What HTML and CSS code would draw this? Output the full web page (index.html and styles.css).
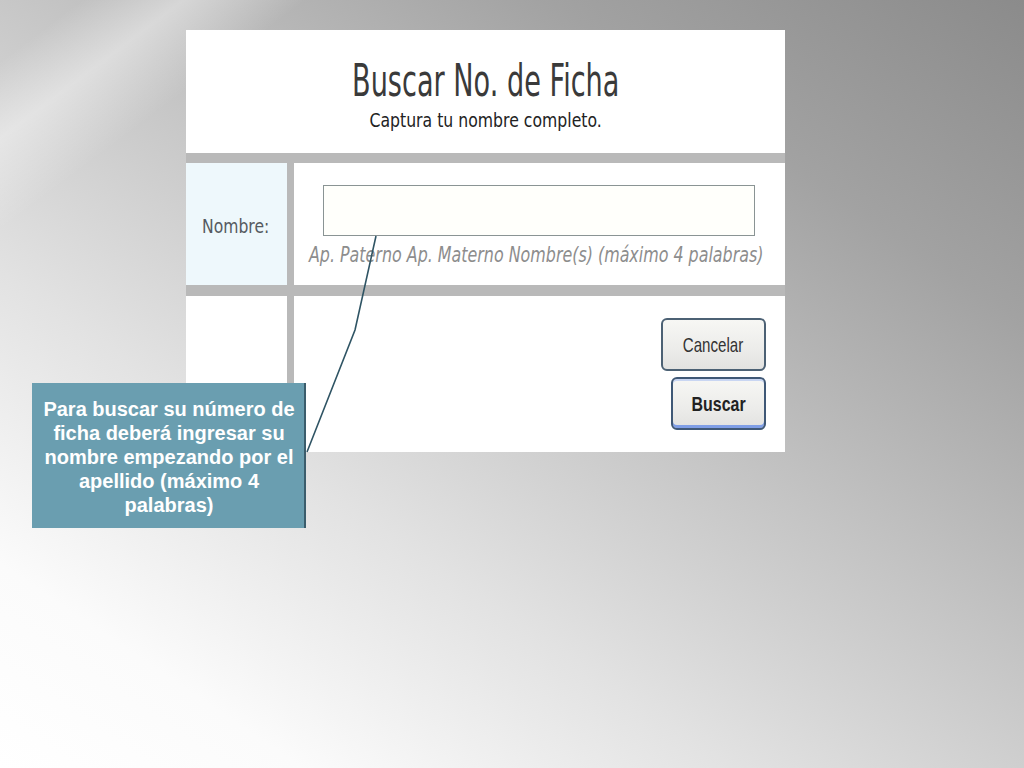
FILE: index.html
```html
<!DOCTYPE html>
<html lang="es">
<head>
<meta charset="utf-8">
<title>Buscar No. de Ficha</title>
<link rel="stylesheet" href="styles.css">
</head>
<body>
<div class="slide">
  <div class="panel">
    <div class="header">
      <div class="title"><span class="title-text">Buscar No. de Ficha</span></div>
      <div class="subtitle"><span class="subtitle-text">Captura tu nombre completo.</span></div>
    </div>
    <div class="grid">
      <div class="cell label-cell"><span class="label-text">Nombre:</span></div>
      <div class="cell input-cell">
        <input class="name-input" type="text" aria-label="Nombre">
        <div class="hint"><span class="hint-text">Ap. Paterno Ap. Materno Nombre(s) (máximo 4 palabras)</span></div>
      </div>
      <div class="cell empty-cell"></div>
      <div class="cell actions-cell">
        <button class="btn btn-cancel" type="button"><span class="btn-text">Cancelar</span></button>
        <button class="btn btn-search" type="button"><span class="btn-text btn-text-bold">Buscar</span></button>
      </div>
    </div>
  </div>

  <svg class="connector" width="1024" height="768" viewBox="0 0 1024 768" aria-hidden="true">
    <polyline points="376,236 355,330 307,452" fill="none" stroke="#2f5464" stroke-width="1.6"/>
  </svg>

  <div class="callout">Para buscar su número de ficha deberá ingresar su nombre empezando por el apellido (máximo 4 palabras)</div>
</div>
</body>
</html>
```

FILE: styles.css
```css
html, body {
  margin: 0;
  padding: 0;
}

body {
  width: 1024px;
  height: 768px;
  overflow: hidden;
  font-family: "DejaVu Sans", Verdana, sans-serif;
}

.slide {
  position: relative;
  width: 1024px;
  height: 768px;
  box-sizing: border-box;
  padding: 30px 0 0 186px;
  background:
    linear-gradient(143deg, rgba(255,255,255,0) 4%, rgba(255,255,255,0.4) 9%, rgba(255,255,255,0) 15%),
    linear-gradient(214deg, #8b8b8b 0%, #a2a2a2 22%, #c4c4c4 45%, #e2e2e2 66%, #fbfbfb 86%, #ffffff 100%);
}

.panel {
  width: 599px;
  background: #b9b9b9;
}

.header {
  height: 123px;
  box-sizing: border-box;
  padding-top: 26px;
  background: #ffffff;
  text-align: center;
  margin-bottom: 10px;
}

.title {
  height: 50px;
  line-height: 50px;
  font-size: 45px;
  color: #3a3a3a;
  white-space: nowrap;
  display: flex;
  justify-content: center;
}

.title-text {
  display: inline-block;
  transform: scaleX(0.603);
}

.subtitle {
  margin-top: 2px;
  height: 24px;
  line-height: 24px;
  font-size: 19px;
  color: #222222;
  white-space: nowrap;
  display: flex;
  justify-content: center;
}

.subtitle-text {
  display: inline-block;
  transform: scaleX(0.826);
}

.grid {
  display: grid;
  grid-template-columns: 101px minmax(0, 1fr);
  grid-template-rows: 122px 156px;
  column-gap: 7px;
  row-gap: 11px;
}

.cell {
  background: #ffffff;
  box-sizing: border-box;
  min-width: 0;
}

.label-cell {
  background: #eef8fc;
  display: flex;
  align-items: center;
  padding: 4px 0 0 16px;
  font-size: 20px;
  line-height: 24px;
  color: #555a60;
}

.label-text {
  display: inline-block;
  transform: scaleX(0.78);
  transform-origin: left center;
}

.input-cell {
  display: flex;
  flex-direction: column;
  align-items: center;
  padding-top: 22px;
}

.name-input {
  width: 432px;
  height: 51px;
  box-sizing: border-box;
  margin: 0 0 0 -2px;
  border: 1px solid #8a9494;
  background: #fffffb;
  outline: none;
  padding: 0;
  flex: none;
}

.hint {
  margin-top: 7px;
  width: 100%;
  display: flex;
  justify-content: center;
  font-size: 21px;
  line-height: 24px;
  font-style: italic;
  color: #8d8d8d;
  white-space: nowrap;
}

.hint-text {
  display: inline-block;
  flex: none;
  transform: scaleX(0.757);
  margin-left: -6px;
}

.actions-cell {
  display: flex;
  flex-direction: column;
  align-items: flex-end;
  gap: 6px;
  padding: 22px 19px 0 0;
}

.btn {
  height: 53px;
  box-sizing: border-box;
  border: 2px solid #4c6174;
  border-radius: 6px;
  background: linear-gradient(#f7f7f4, #ececea 60%, #e2e2e0);
  padding: 0;
  display: flex;
  align-items: center;
  justify-content: center;
  font-family: "Liberation Sans", Arial, sans-serif;
  font-size: 21px;
  color: #333333;
  white-space: nowrap;
}

.btn-cancel {
  width: 105px;
}

.btn-search {
  width: 95px;
  border-color: #3f5876;
  box-shadow: inset 0 -3px 0 #7f9ee6, inset 0 2px 0 #c9d6f2;
}

.btn-text {
  display: inline-block;
  transform: scaleX(0.72);
}

.btn-text-bold {
  font-weight: bold;
  color: #222222;
  transform: scaleX(0.76);
}

.connector {
  position: absolute;
  left: 0;
  top: 0;
  pointer-events: none;
}

.callout {
  position: absolute;
  left: 32px;
  top: 383px;
  width: 274px;
  height: 145px;
  box-sizing: border-box;
  padding: 14px 6px 0 8px;
  background: #6a9eb0;
  border-right: 2px solid #3b5d6c;
  color: #ffffff;
  font-family: "Liberation Sans", Arial, sans-serif;
  font-weight: bold;
  font-size: 20px;
  line-height: 24px;
  text-align: center;
}
```
